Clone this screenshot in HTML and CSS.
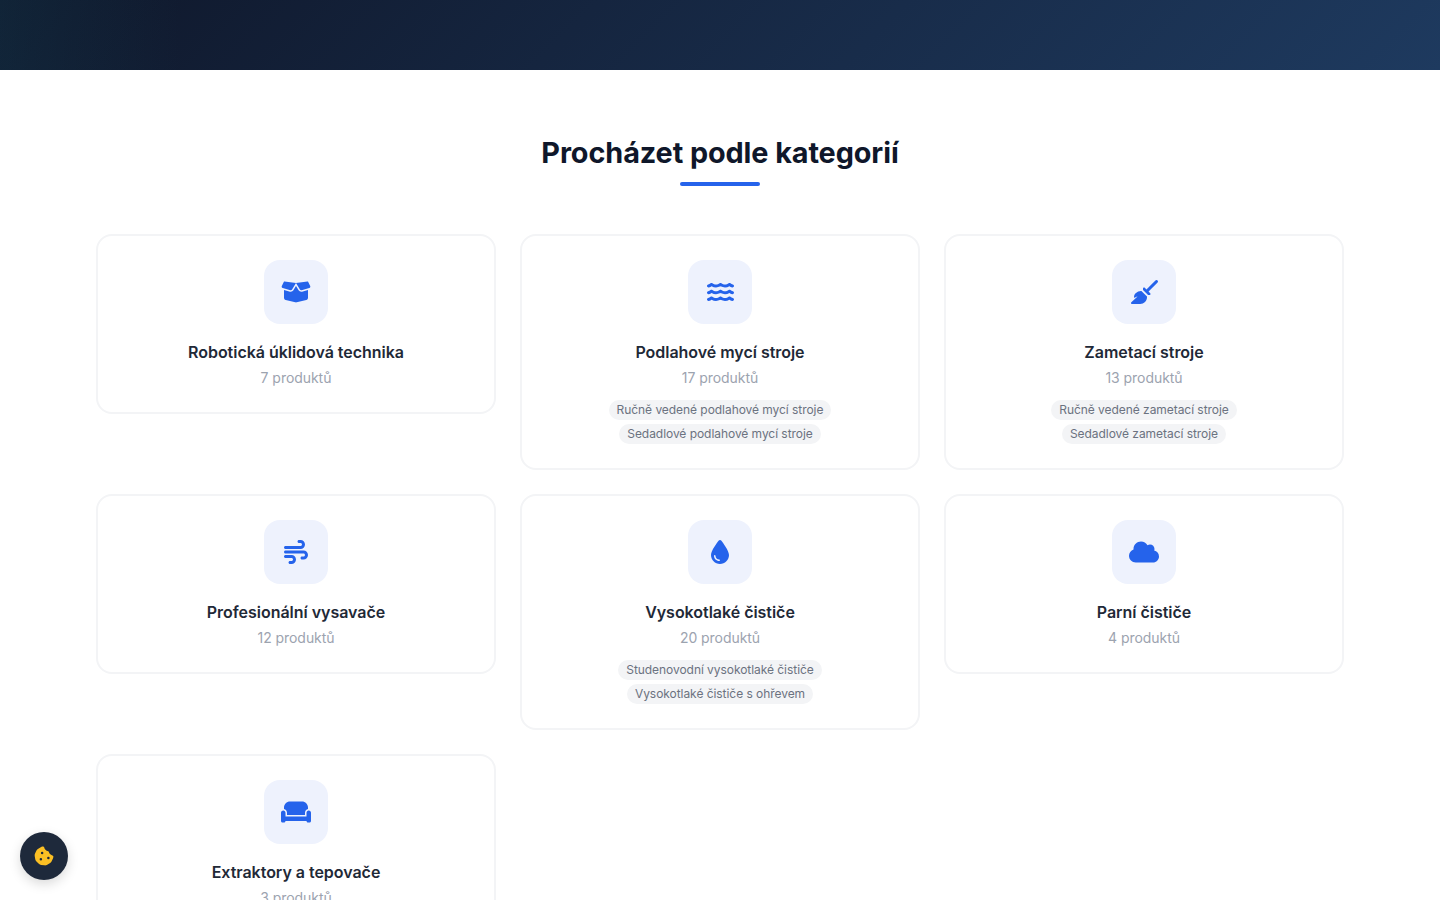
FILE: index.html
```html
<!DOCTYPE html>
<html lang="cs">
<head>
  <meta charset="UTF-8">
  <meta name="viewport" content="width=device-width, initial-scale=1.0">
  <title>Procházet podle kategorií</title>
  <link rel="stylesheet" href="styles.css">
</head>
<body>
  <header class="topBar"></header>

  <main class="categories">
    <h2 class="sectionTitle">Procházet podle kategorií</h2>
    <div class="titleLine"></div>

    <div class="categoryGrid">
      <a class="categoryCard" href="#">
        <div class="iconBox">
          <svg class="icon" width="30" height="24" viewBox="0 0 640 512"><path d="M58.9 42.1c3-6.1 9.6-9.6 16.3-8.7L320 64 564.8 33.4c6.7-.8 13.3 2.7 16.3 8.7l41.7 83.4c9 17.9-.6 39.6-19.8 45.1L439.6 217.3c-13.9 4-28.8-1.9-36.2-14.3L320 64 236.6 203c-7.4 12.4-22.3 18.3-36.2 14.3L37.1 170.6c-19.3-5.5-28.8-27.2-19.8-45.1L58.9 42.1zM321.1 128l54.9 91.4c14.9 24.8 44.6 36.6 72.5 28.6L576 211.6v167c0 22-15 41.2-36.4 46.6l-204.1 51c-10.2 2.6-20.9 2.6-31 0l-204.1-51C79 419.7 64 400.5 64 378.5v-167L191.6 248c27.8 8 57.6-3.8 72.5-28.6L318.9 128h2.2z"/></svg>
        </div>
        <h3 class="categoryName">Robotická úklidová technika</h3>
        <p class="categoryCount">7 produktů</p>
      </a>

      <a class="categoryCard" href="#">
        <div class="iconBox">
          <svg class="icon" width="27" height="24" viewBox="0 0 576 512"><path d="M269.5 69.9c11.1-7.9 25.9-7.9 37 0C329 85.4 356.5 96 384 96c26.9 0 55.4-10.8 77.4-26.1l0 0c11.9-8.5 28.1-7.8 39.2 1.7c14.4 11.9 32.5 21 50.6 25.2c17.2 4 27.9 21.2 23.9 38.4s-21.2 27.9-38.4 23.9c-24.5-5.7-44.9-16.5-58.2-25C449.5 149.7 417 160 384 160c-31.9 0-60.6-9.9-80.4-18.9c-5.8-2.7-11.1-5.3-15.6-7.7c-4.5 2.4-9.7 5.1-15.6 7.7c-19.8 9-48.5 18.9-80.4 18.9c-33 0-65.5-10.3-94.5-25.8c-13.4 8.4-33.7 19.3-58.2 25c-17.2 4-34.4-6.7-38.4-23.9s6.7-34.4 23.9-38.4C42.8 92.6 61 83.5 75.3 71.6c11.1-9.5 27.3-10.1 39.2-1.7l0 0C136.7 85.2 165.1 96 192 96c27.5 0 55-10.6 77.5-26.1zm37 288C329 373.4 356.5 384 384 384c26.9 0 55.4-10.8 77.4-26.1l0 0c11.9-8.5 28.1-7.8 39.2 1.7c14.4 11.9 32.5 21 50.6 25.2c17.2 4 27.9 21.2 23.9 38.4s-21.2 27.9-38.4 23.9c-24.5-5.7-44.9-16.5-58.2-25C449.5 437.7 417 448 384 448c-31.9 0-60.6-9.9-80.4-18.9c-5.8-2.7-11.1-5.3-15.6-7.7c-4.5 2.4-9.7 5.1-15.6 7.7c-19.8 9-48.5 18.9-80.4 18.9c-33 0-65.5-10.3-94.5-25.8c-13.4 8.4-33.7 19.3-58.2 25c-17.2 4-34.4-6.7-38.4-23.9s6.7-34.4 23.9-38.4c18.1-4.2 36.2-13.3 50.6-25.2c11.1-9.4 27.3-10.1 39.2-1.7l0 0C136.7 373.2 165.1 384 192 384c27.5 0 55-10.6 77.5-26.1c11.1-7.9 25.9-7.9 37 0zm0-144C329 229.4 356.5 240 384 240c26.9 0 55.4-10.8 77.4-26.1l0 0c11.9-8.5 28.1-7.8 39.2 1.7c14.4 11.9 32.5 21 50.6 25.2c17.2 4 27.9 21.2 23.9 38.4s-21.2 27.9-38.4 23.9c-24.5-5.7-44.9-16.5-58.2-25C449.5 293.7 417 304 384 304c-31.9 0-60.6-9.9-80.4-18.9c-5.8-2.7-11.1-5.3-15.6-7.7c-4.5 2.4-9.7 5.1-15.6 7.7c-19.8 9-48.5 18.9-80.4 18.9c-33 0-65.5-10.3-94.5-25.8c-13.4 8.4-33.7 19.3-58.2 25c-17.2 4-34.4-6.7-38.4-23.9s6.7-34.4 23.9-38.4c18.1-4.2 36.2-13.3 50.6-25.2c11.1-9.4 27.3-10.1 39.2-1.7l0 0C136.7 229.2 165.1 240 192 240c27.5 0 55-10.6 77.5-26.1c11.1-7.9 25.9-7.9 37 0z"/></svg>
        </div>
        <h3 class="categoryName">Podlahové mycí stroje</h3>
        <p class="categoryCount">17 produktů</p>
        <div class="chipList">
          <span class="chip">Ručně vedené podlahové mycí stroje</span>
          <span class="chip">Sedadlové podlahové mycí stroje</span>
        </div>
      </a>

      <a class="categoryCard" href="#">
        <div class="iconBox">
          <svg class="icon" width="27" height="24" viewBox="0 0 576 512"><path d="M566.6 54.6c12.5-12.5 12.5-32.8 0-45.3s-32.8-12.5-45.3 0l-192 192-34.7-34.7c-4.2-4.2-10-6.6-16-6.6c-12.5 0-22.6 10.1-22.6 22.6v29.1L364.3 320h29.1c12.5 0 22.6-10.1 22.6-22.6c0-6-2.4-11.8-6.6-16l-34.7-34.7 192-192zM341.1 353.4L222.6 234.9c-42.7-3.7-85.2 11.7-115.8 42.3l-8 8C76.5 307.5 64 337.7 64 369.2c0 6.8 7.1 11.2 13.2 8.2l51.1-25.5c5-2.5 9.5 4.1 5.4 7.9L7.3 473.4C2.7 477.6 0 483.6 0 489.9C0 502.1 9.9 512 22.1 512l173.3 0c38.8 0 75.9-15.4 103.4-42.8c30.6-30.6 45.9-73.1 42.3-115.8z"/></svg>
        </div>
        <h3 class="categoryName">Zametací stroje</h3>
        <p class="categoryCount">13 produktů</p>
        <div class="chipList">
          <span class="chip">Ručně vedené zametací stroje</span>
          <span class="chip">Sedadlové zametací stroje</span>
        </div>
      </a>

      <a class="categoryCard" href="#">
        <div class="iconBox">
          <svg class="icon" width="24" height="24" viewBox="0 0 512 512"><path d="M288 32c0 17.7 14.3 32 32 32h32c17.7 0 32 14.3 32 32s-14.3 32-32 32H32c-17.7 0-32 14.3-32 32s14.3 32 32 32H352c53 0 96-43 96-96s-43-96-96-96H320c-17.7 0-32 14.3-32 32zm64 352c0 17.7 14.3 32 32 32h32c53 0 96-43 96-96s-43-96-96-96H32c-17.7 0-32 14.3-32 32s14.3 32 32 32H416c17.7 0 32 14.3 32 32s-14.3 32-32 32H384c-17.7 0-32 14.3-32 32zM128 512h32c53 0 96-43 96-96s-43-96-96-96H32c-17.7 0-32 14.3-32 32s14.3 32 32 32H160c17.7 0 32 14.3 32 32s-14.3 32-32 32H128c-17.7 0-32 14.3-32 32s14.3 32 32 32z"/></svg>
        </div>
        <h3 class="categoryName">Profesionální vysavače</h3>
        <p class="categoryCount">12 produktů</p>
      </a>

      <a class="categoryCard" href="#">
        <div class="iconBox">
          <svg class="icon" width="18" height="24" viewBox="0 0 384 512"><path d="M192 512C86 512 0 426 0 320C0 228.8 130.2 57.7 166.6 11.7C172.6 4.2 181.5 0 191.1 0h1.8c9.6 0 18.5 4.2 24.5 11.7C253.8 57.7 384 228.8 384 320c0 106-86 192-192 192zM96 336c0-8.8-7.2-16-16-16s-16 7.2-16 16c0 61.9 50.1 112 112 112c8.8 0 16-7.2 16-16s-7.2-16-16-16c-44.2 0-80-35.8-80-80z"/></svg>
        </div>
        <h3 class="categoryName">Vysokotlaké čističe</h3>
        <p class="categoryCount">20 produktů</p>
        <div class="chipList">
          <span class="chip">Studenovodní vysokotlaké čističe</span>
          <span class="chip">Vysokotlaké čističe s ohřevem</span>
        </div>
      </a>

      <a class="categoryCard" href="#">
        <div class="iconBox">
          <svg class="icon" width="30" height="24" viewBox="0 0 640 512"><path d="M0 336c0 79.5 64.5 144 144 144H512c70.7 0 128-57.3 128-128c0-61.9-44-113.6-102.4-125.4c4.1-10.7 6.4-22.4 6.4-34.6c0-53-43-96-96-96c-19.7 0-38.1 6-53.3 16.2C367 64.2 315.3 32 256 32C167.6 32 96 103.6 96 192c0 2.7 .1 5.4 .2 8.1C40.2 219.8 0 273.2 0 336z"/></svg>
        </div>
        <h3 class="categoryName">Parní čističe</h3>
        <p class="categoryCount">4 produktů</p>
      </a>

      <a class="categoryCard" href="#">
        <div class="iconBox">
          <svg class="icon" width="30" height="24" viewBox="0 0 640 512"><path d="M64 160C64 89.3 121.3 32 192 32H448c70.7 0 128 57.3 128 128v33.6c-36.5 7.4-64 39.7-64 78.4v48H128V272c0-38.7-27.5-71-64-78.4V160zM544 272c0-20.9 13.4-38.7 32-45.3c5-1.8 10.4-2.7 16-2.7c26.5 0 48 21.5 48 48V448c0 17.7-14.3 32-32 32H576c-17.7 0-32-14.3-32-32H96c0 17.7-14.3 32-32 32H32c-17.7 0-32-14.3-32-32V272c0-26.5 21.5-48 48-48c5.6 0 11 1 16 2.7c18.6 6.6 32 24.4 32 45.3v48 32h32H512h32V320 272z"/></svg>
        </div>
        <h3 class="categoryName">Extraktory a tepovače</h3>
        <p class="categoryCount">3 produktů</p>
      </a>
    </div>
  </main>

  <button class="cookieButton" aria-label="Nastavení cookies">
    <svg class="cookieIcon" width="20" height="20" viewBox="0 0 512 512"><path d="M257.5 27.6c-.8-5.4-4.9-9.8-10.3-10.6c-22.1-3.1-44.6 .9-64.4 11.4l-74 39.5C89.1 78.4 73.2 94.9 63.4 115L26.7 190.6c-9.8 20.1-13 42.9-9.1 64.9l14.5 82.8c3.9 22.1 14.6 42.3 30.7 57.9l60.3 58.4c16.1 15.6 36.6 25.6 58.7 28.7l83 11.7c22.1 3.1 44.6-.9 64.4-11.4l74-39.5c19.7-10.5 35.6-27 45.4-47.2l36.7-75.5c9.8-20.1 13-42.9 9.1-64.9c-.9-5.3-5.3-9.3-10.6-10.1c-51.5-8.2-92.8-47.1-104.5-97.4c-1.8-7.6-8-13.4-15.7-14.6c-54.6-8.7-97.7-52-106.2-106.8zM208 144a32 32 0 1 1 0 64 32 32 0 1 1 0-64zM144 336a32 32 0 1 1 64 0 32 32 0 1 1 -64 0zm224-64a32 32 0 1 1 0 64 32 32 0 1 1 0-64z"/></svg>
  </button>
</body>
</html>
```

FILE: styles.css
```css
* {
  margin: 0;
  padding: 0;
  box-sizing: border-box;
}

body {
  font-family: Inter, "Noto Sans", sans-serif;
  background-color: #fff;
  color: #111827;
}

/* Spodek tmavého pruhu */
.topBar {
  height: 70px;
  background:
    linear-gradient(90deg, rgba(20, 60, 80, 0.35) 0, rgba(20, 60, 80, 0) 180px),
    linear-gradient(135deg, #0f172a 0%, #1e3a5f 100%);
}

.categories {
  max-width: 1280px;
  margin: 0 auto;
  padding: 64px 16px;
}

.sectionTitle {
  font-size: 28.8px;
  line-height: 38px;
  font-weight: 700;
  letter-spacing: -0.08px;
  text-align: center;
  color: #0f172a;
}

.titleLine {
  width: 80px;
  height: 4px;
  margin: 10px auto 48px;
  border-radius: 2px;
  background-color: #2563eb;
}

.categoryGrid {
  display: grid;
  grid-template-columns: repeat(3, 1fr);
  gap: 24px;
  align-items: start;
}

.categoryCard {
  display: block;
  padding: 24px;
  border: 2px solid #f3f4f6;
  border-radius: 16px;
  background-color: #fff;
  text-align: center;
  text-decoration: none;
}

.iconBox {
  display: flex;
  align-items: center;
  justify-content: center;
  width: 64px;
  height: 64px;
  margin: 0 auto 16px;
  border-radius: 16px;
  background-color: #eef2fd;
}

.icon {
  fill: #2563eb;
}

.categoryName {
  font-size: 16px;
  line-height: 24px;
  font-weight: 600;
  letter-spacing: -0.03px;
  color: #1f2937;
}

.categoryCount {
  margin-top: 4px;
  font-size: 14px;
  line-height: 20px;
  letter-spacing: -0.05px;
  color: #9ca3af;
}

.chipList {
  display: flex;
  flex-wrap: wrap;
  justify-content: center;
  gap: 4px;
  margin-top: 12px;
}

.chip {
  padding: 2px 8px;
  border-radius: 9999px;
  background-color: #f3f4f6;
  font-size: 12px;
  line-height: 16px;
  letter-spacing: -0.05px;
  color: #6b7280;
}

.cookieButton {
  position: fixed;
  left: 20px;
  bottom: 20px;
  display: flex;
  align-items: center;
  justify-content: center;
  width: 48px;
  height: 48px;
  border: none;
  border-radius: 50%;
  background-color: #1e293b;
  box-shadow: 0 4px 12px rgba(0, 0, 0, 0.15);
  cursor: pointer;
}

.cookieIcon {
  fill: #fbbf24;
}
```
